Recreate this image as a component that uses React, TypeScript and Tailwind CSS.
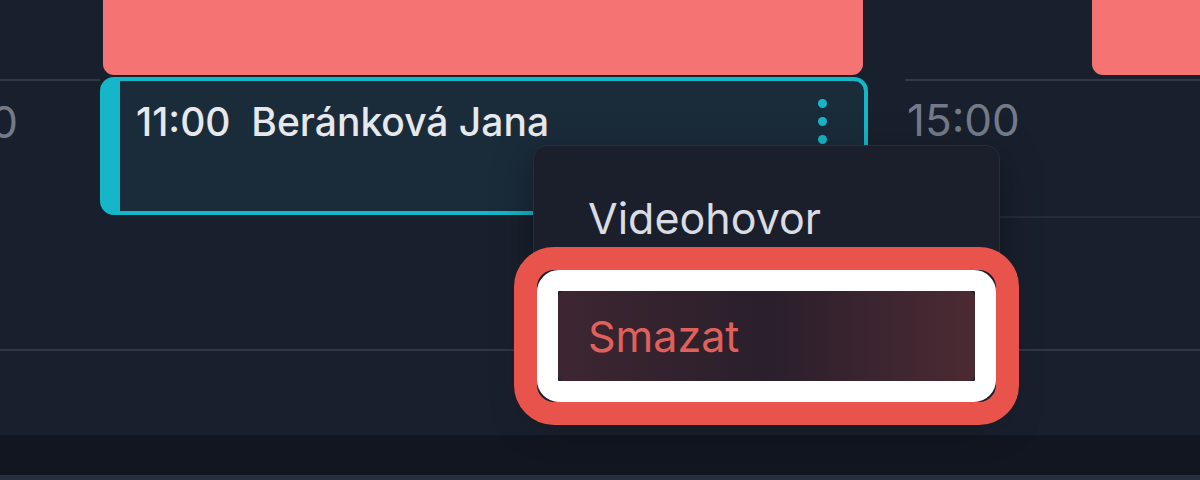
const TimeLabel = ({ time }: { time: string }) => (
  <span className="whitespace-nowrap text-[44px] leading-none font-normal text-[#737b88]">
    {time}
  </span>
);

const MenuItem = ({ label }: { label: string }) => (
  <div className="flex h-[90px] items-center rounded-[6px] px-[30px] text-[43px] leading-none text-[#d9dce2]">
    {label}
  </div>
);

export default function App() {
  return (
    <div className="flex h-[480px] w-[1200px] flex-col overflow-hidden bg-[#19202d] font-['Inter',sans-serif]">
      <div className="relative h-[435px]">
        {/* events running over from the previous slot */}
        <div className="flex h-[77px] items-start">
          <div className="w-[103px] shrink-0"></div>
          <div className="h-[75px] w-[760px] shrink-0 rounded-b-[11px] bg-[#f57373]"></div>
          <div className="w-[229px] shrink-0"></div>
          <div className="h-[75px] grow rounded-bl-[11px] bg-[#f57373]"></div>
        </div>

        <div className="flex h-[138px] items-start">
          <div className="mt-[2px] flex h-[136px] w-[100px] shrink-0 justify-end overflow-hidden border-t-2 border-[#313846] pr-[82px] pt-[19px]">
            <TimeLabel time="10:00" />
          </div>

          <div className="flex h-[138px] w-[768px] shrink-0 justify-between rounded-[14px] border-[4px] border-l-[20px] border-[#14b6c8] bg-[#1a2b3a] pl-[16px] pr-[37px]">
            <div className="pt-[21px] text-[39px] leading-none font-medium text-[#e6e8ec]">
              11:00&nbsp;&nbsp;Beránková Jana
            </div>
            <div className="flex flex-col gap-[9px] pt-[18px]">
              <span className="size-[9px] rounded-full bg-[#17b5c9]"></span>
              <span className="size-[9px] rounded-full bg-[#17b5c9]"></span>
              <span className="size-[9px] rounded-full bg-[#17b5c9]"></span>
            </div>
          </div>

          <div className="w-[37px] shrink-0"></div>

          <div className="mt-[2px] h-[139px] grow border-y-2 border-t-[#313846] border-b-[#252c39] pl-[2px] pt-[17px]">
            <TimeLabel time="15:00" />
          </div>
        </div>

        <div className="h-[136px] border-b-2 border-[#303745]"></div>

        {/* context menu */}
        <div className="absolute left-[533px] top-[145px] z-10 flex w-[467px] flex-col gap-[30px] rounded-[14px] border border-[#262e3c] bg-[#1a1f2b] px-[24px] pb-[26px] pt-[27px] shadow-[0_12px_40px_rgba(0,0,0,0.35)]">
          <MenuItem label="Videohovor" />
          <div className="relative -mt-[2px] flex h-[90px] items-center rounded-[6px] bg-gradient-to-r from-[#3d2631] via-[#2a1f2b] to-[#4c2a33] px-[30px] text-[43px] leading-none text-[#e0615b]">
            Smazat
            <span className="pointer-events-none absolute -inset-[21px] rounded-[22px] border-[21px] border-white"></span>
            <span className="pointer-events-none absolute -inset-[44px] rounded-[40px] border-[23px] border-[#e8544b]"></span>
          </div>
        </div>
      </div>
      <div className="h-[40px] bg-[#111621]"></div>
      <div className="h-[5px] bg-[#283040]"></div>
    </div>
  );
}
